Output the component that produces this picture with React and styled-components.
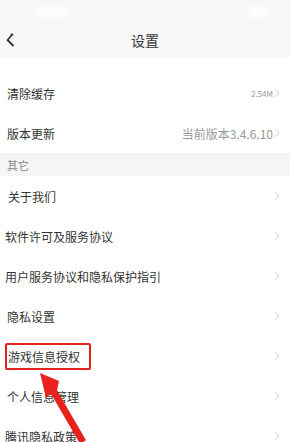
import React from "react";
import styled, { createGlobalStyle } from "styled-components";

const Global = createGlobalStyle`
  html, body { margin: 0; padding: 0; background: #ffffff; }
  body { font-family: "Noto Sans CJK SC", "Noto Sans", sans-serif; color: #333; }
  * { box-sizing: border-box; }
`;

const Page = styled.div`
  position: relative;
  width: 300px;
  height: 442px;
  overflow: hidden;
  background: #fff;
`;

const Screen = styled.div`
  width: 290px;
  display: flex;
  flex-direction: column;
`;

const TopBar = styled.div`
  height: 57px;
  background: #f7f7f7;
  display: flex;
  flex-direction: column;
`;

const StatusBar = styled.div`
  height: 24px;
  display: flex;
  align-items: center;
  justify-content: space-between;
  padding: 0 22px 0 34px;
`;

const Blob = styled.div`
  width: ${(p) => p.w}px;
  height: ${(p) => p.h}px;
  border-radius: 4px;
  background: #ffffff;
  opacity: 0.8;
  filter: blur(2px);
`;

const NavBar = styled.div`
  flex: 1;
  display: grid;
  grid-template-columns: 40px 1fr 40px;
  align-items: center;
  padding-bottom: 2px;
`;

const Back = styled.div`
  padding-left: 6px;
  display: flex;
  align-items: center;
`;

const Title = styled.div`
  text-align: center;
  font-size: 14px;
  color: #333;
`;

const Spacer = styled.div`
  height: 16px;
`;

const Row = styled.div`
  height: 40px;
  display: flex;
  align-items: center;
  padding: 0 10px 0 ${(p) => p.pl ?? 6}px;
`;

const Label = styled.div`
  flex: 1;
  font-size: 12px;
  color: #333;
  white-space: nowrap;
`;

const Value = styled.div`
  font-size: ${(p) => p.size}px;
  color: #999;
  margin-right: 1px;
`;

const Section = styled.div`
  height: 23px;
  background: #f5f5f5;
  display: flex;
  align-items: center;
  padding-left: 7px;
  font-size: 11px;
  color: #888;
`;

const Highlight = styled.span`
  display: inline-block;
  border: 2px solid #e3231f;
  border-radius: 2px;
  padding: 3px 9px 3px 1px;
  margin-left: -2px;
  line-height: 17px;
`;

const Overlay = styled.svg`
  position: absolute;
  left: 0;
  top: 0;
  pointer-events: none;
`;

const Chevron = () => (
  <svg width="6" height="10" viewBox="0 0 6 10">
    <path d="M1 1 L5 5 L1 9" fill="none" stroke="#d3d3d3" strokeWidth="1" />
  </svg>
);

const items = [
  { label: "关于我们", pl: 8 },
  { label: "软件许可及服务协议", pl: 5 },
  { label: "用户服务协议和隐私保护指引", pl: 5 },
  { label: "隐私设置", pl: 7 },
  { label: "游戏信息授权", pl: 7, hl: true },
  { label: "个人信息管理", pl: 7 },
  { label: "腾讯隐私政策", pl: 5 },
];

export default function App() {
  return (
    <Page>
      <Global />
      <Screen>
        <TopBar>
          <StatusBar>
            <Blob w={36} h={8} />
            <Blob w={20} h={12} />
          </StatusBar>
          <NavBar>
            <Back>
              <svg width="9" height="14" viewBox="0 0 9 14">
                <path
                  d="M6.5 1.5 Q5 1 5.5 2.5 L1.5 7 L7 12.5"
                  fill="none"
                  stroke="#2f2f3a"
                  strokeWidth="1.8"
                  strokeLinecap="round"
                  strokeLinejoin="round"
                />
              </svg>
            </Back>
            <Title>设置</Title>
            <div />
          </NavBar>
        </TopBar>
        <Spacer />
        <Row pl={7}>
          <Label>清除缓存</Label>
          <Value size={8}>2.54M</Value>
          <Chevron />
        </Row>
        <Row pl={7}>
          <Label>版本更新</Label>
          <Value size={12}>当前版本3.4.6.10</Value>
          <Chevron />
        </Row>
        <Section>其它</Section>
        {items.map((it) => (
          <Row key={it.label} pl={it.pl}>
            <Label>{it.hl ? <Highlight>{it.label}</Highlight> : it.label}</Label>
            <Chevron />
          </Row>
        ))}
      </Screen>
      <Overlay width="300" height="442" viewBox="0 0 300 442">
        <polygon
          points="40,373 59,381 57,390.2 86,440.2 80,443.8 51,393.8 46,398"
          fill="#e8231d"
        />
      </Overlay>
    </Page>
  );
}
